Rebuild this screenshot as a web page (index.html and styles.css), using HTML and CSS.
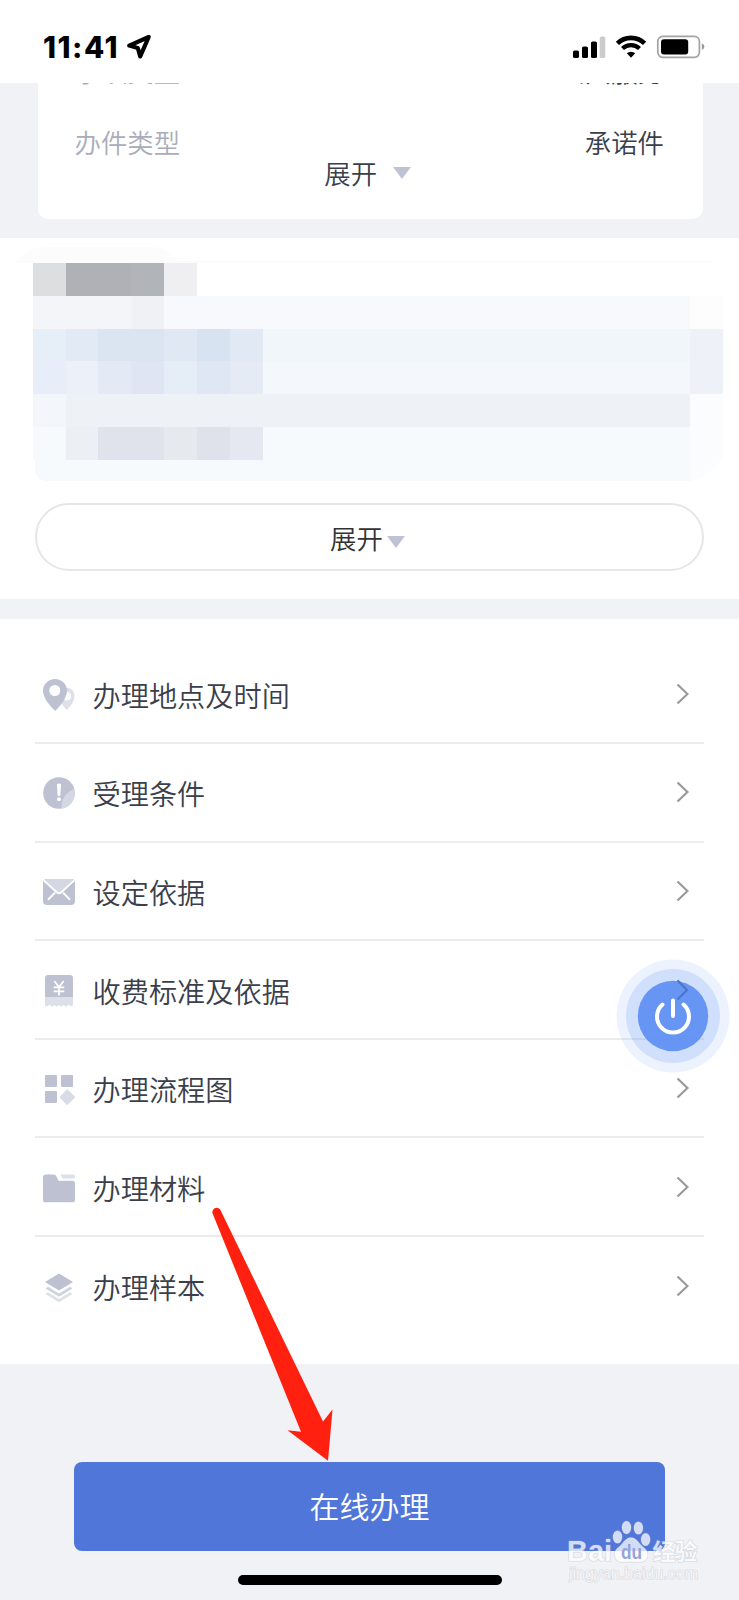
FILE: index.html
```html
<!DOCTYPE html>
<html lang="zh-CN">
<head>
  <meta charset="UTF-8" />
  <meta name="viewport" content="width=device-width, initial-scale=1" />
  <title>办事指南</title>
  <link rel="stylesheet" href="styles.css">
</head>
<body>

  <header class="status-bar">
    <div class="status-left">
      <span class="time">11:41</span>
      <svg class="location" width="26" height="26" viewBox="0 0 26 26">
        <path d="M22.7 3 L3.2 11.6 L11.8 14 L14.2 22.4 Z" fill="none" stroke="#000" stroke-width="4.2" stroke-linejoin="round"/>
      </svg>
    </div>
    <div class="status-right">
      <svg width="34" height="24" viewBox="0 0 34 24">
        <rect x="1" y="15.5" width="6" height="7.5" rx="1.6"/>
        <rect x="10" y="11.5" width="6" height="11.5" rx="1.6"/>
        <rect x="19" y="6.5" width="6" height="16.5" rx="1.6"/>
        <rect x="27.7" y="1.5" width="5.6" height="21.5" rx="1.6" fill="#ccc"/>
      </svg>
      <svg width="32" height="24" viewBox="0 0 32 24">
        <path d="M2.4 8.4 A19.5 19.5 0 0 1 29.6 8.4" fill="none" stroke="#000" stroke-width="4.6"/>
        <path d="M7.5 13.5 A12.2 12.2 0 0 1 24.5 13.5" fill="none" stroke="#000" stroke-width="4.2"/>
        <path d="M16 22.7 L11.8 18.3 A6.2 6.2 0 0 1 20.2 18.3 Z"/>
      </svg>
      <svg width="49" height="24" viewBox="0 0 49 24">
        <rect x="1.8" y="1.3" width="41.6" height="21" rx="5" fill="#fff" stroke="#a3a3a3" stroke-width="1.7"/>
        <rect x="5" y="4.2" width="27.2" height="15.2" rx="3"/>
        <path d="M45.8 8.2 Q48.4 9.4 48.4 11.6 Q48.4 13.8 45.8 15 Z" fill="#999"/>
      </svg>
    </div>
  </header>

  <main>
    <section class="info">
      <div class="info-card">
        <div class="info-row">
          <span class="label">事项类型</span>
          <span class="value">公共服务</span>
        </div>
        <div class="info-row">
          <span class="label">办件类型</span>
          <span class="value">承诺件</span>
        </div>
        <div class="info-more">展开<i class="triangle"></i></div>
      </div>
    </section>

    <section class="preview">
      <!-- masked content -->
      <svg class="mosaic" width="739" height="250" viewBox="0 0 739 250">
        <path d="M16 25 Q26 10 44 9 H154 Q170 11 180 25 Z" fill="#fcfcfd"/>
        <rect x="180" y="23" width="532" height="1.6" fill="#fafafb"/>
        <g shape-rendering="crispEdges">
          <rect x="33" y="25" width="33" height="33" fill="#dddee0"/>
          <rect x="66" y="25" width="65" height="33" fill="#b0b1b6"/>
          <rect x="131" y="25" width="33" height="33" fill="#b1b4b9"/>
          <rect x="164" y="25" width="33" height="33" fill="#efeef0"/>
          <rect x="33" y="58" width="98" height="33" fill="#f4f5f8"/>
          <rect x="131" y="58" width="33" height="33" fill="#f0f1f5"/>
          <rect x="164" y="58" width="526" height="33" fill="#f7f9fd"/>
          <rect x="690" y="58" width="33" height="33" fill="#fdfdfe"/>
          <rect x="33" y="91" width="33" height="32" fill="#e6eef8"/>
          <rect x="66" y="91" width="32" height="32" fill="#e2ebf5"/>
          <rect x="98" y="91" width="66" height="32" fill="#dae5f1"/>
          <rect x="164" y="91" width="33" height="32" fill="#e0e8f3"/>
          <rect x="197" y="91" width="33" height="32" fill="#d8e3f2"/>
          <rect x="230" y="91" width="33" height="32" fill="#e1e9f4"/>
          <rect x="263" y="91" width="427" height="32" fill="#f1f6fa"/>
          <rect x="33" y="123" width="33" height="33" fill="#e8eef9"/>
          <rect x="66" y="123" width="32" height="33" fill="#ebf0f9"/>
          <rect x="98" y="123" width="33" height="33" fill="#e3e9f5"/>
          <rect x="131" y="123" width="33" height="33" fill="#dfe5f3"/>
          <rect x="164" y="123" width="33" height="33" fill="#e5edf6"/>
          <rect x="197" y="123" width="33" height="33" fill="#dfe6f4"/>
          <rect x="230" y="123" width="33" height="33" fill="#e4ebf5"/>
          <rect x="263" y="123" width="427" height="33" fill="#f4f8fd"/>
          <rect x="690" y="91" width="33" height="65" fill="#eef1f8"/>
          <rect x="33" y="156" width="33" height="33" fill="#f3f7fb"/>
          <rect x="66" y="156" width="624" height="33" fill="#eef2f7"/>
          <rect x="33" y="189" width="657" height="33" fill="#f6fafd"/>
          <rect x="66" y="189" width="32" height="33" fill="#eceff3"/>
          <rect x="98" y="189" width="66" height="33" fill="#e0e3eb"/>
          <rect x="164" y="189" width="33" height="33" fill="#e6e9ed"/>
          <rect x="197" y="189" width="33" height="33" fill="#dfe2ea"/>
          <rect x="230" y="189" width="33" height="33" fill="#e5e8f1"/>
        </g>
        <path d="M35 222 H690 V243 H46 Q35 242 35 230 Z" fill="#f6fafd"/>
        <path d="M690 156 H723 V220 Q708 240 690 243 Z" fill="#fbfcfe"/>
      </svg>
      <button class="expand-btn"><span>展开</span><i class="triangle"></i></button>
    </section>

    <ul class="guide-list">
      <li>
        <svg class="icon" viewBox="0 0 32 32">
          <path fill-rule="evenodd" d="M22.5 8.5 C28 8.5 31.5 12.5 31.5 17 C31.5 21.7 28 26.5 24 31 C22 29 20 26.5 18.5 24.5 Z M24 13 A4.2 4.2 0 1 0 24 21.4 A4.2 4.2 0 1 0 24 13 Z" fill="#dddfe9"/>
          <path d="M12 0 C18.7 0 24 5.2 24 11.5 C24 18.5 18 26 12.2 32 C6 26 0 18.5 0 11.5 C0 5.2 5.3 0 12 0 Z" fill="#bec1d1"/>
          <circle cx="11.8" cy="11.5" r="5.5" fill="#fff"/>
        </svg>
        <span class="name">办理地点及时间</span>
        <svg class="chevron" viewBox="0 0 13 22"><path d="M1.5 1.5 L11.5 11 L1.5 20.5"/></svg>
      </li>
      <li>
        <svg class="icon" viewBox="0 0 32 32">
          <circle cx="16" cy="16" r="15.8" fill="#bec1d1"/>
          <path d="M18.5 31.6 C18.5 21 23 15.5 31 12 C33.2 22 28 30.5 18.5 31.6 Z" fill="#d5d8e4"/>
          <path d="M14 7 Q16 6 18 7 L17.4 18.5 Q16 19.5 14.6 18.5 Z" fill="#fff"/>
          <circle cx="16" cy="22.3" r="2" fill="#fff"/>
        </svg>
        <span class="name">受理条件</span>
        <svg class="chevron" viewBox="0 0 13 22"><path d="M1.5 1.5 L11.5 11 L1.5 20.5"/></svg>
      </li>
      <li>
        <svg class="icon" viewBox="0 0 32 32">
          <rect x="0" y="3" width="32" height="26" rx="4" fill="#bec1d1"/>
          <path d="M2 3.8 Q3 3 4 3 H28 Q29 3 30 3.8 L16 17 Z" fill="#d5d8e3"/>
          <path d="M1 4.5 L14 16.4 Q16 18 18 16.4 L31 4.5 M5 23.7 L12 16.6 M27 23.7 L20 16.6" fill="none" stroke="#fff" stroke-width="2"/>
        </svg>
        <span class="name">设定依据</span>
        <svg class="chevron" viewBox="0 0 13 22"><path d="M1.5 1.5 L11.5 11 L1.5 20.5"/></svg>
      </li>
      <li>
        <svg class="icon" viewBox="0 0 32 32">
          <path d="M2 21 H30 V30.5 Q27.7 32.3 25.5 29.5 Q23 33.4 20.7 29.8 Q18.3 33.4 16 29.8 Q13.7 33.4 11.3 29.8 Q9 33.4 6.5 29.5 Q4.3 32.3 2 30.5 Z" fill="#dddfe9"/>
          <path d="M5 0 H27 Q30 0 30 3 V22 H2 V3 Q2 0 5 0 Z" fill="#bec1d1"/>
          <path d="M11.3 6 L16 12 L20.7 6 M16 12 V20.5 M10.7 12.3 H21.3 M10.7 16.3 H21.3" fill="none" stroke="#fff" stroke-width="1.7"/>
        </svg>
        <span class="name">收费标准及依据</span>
        <svg class="chevron" viewBox="0 0 13 22"><path d="M1.5 1.5 L11.5 11 L1.5 20.5"/></svg>
      </li>
      <li>
        <svg class="icon" viewBox="0 0 32 32">
          <g fill="#bec1d1">
            <rect x="2" y="2" width="12" height="12" rx="1"/>
            <rect x="18" y="2" width="12" height="12" rx="1"/>
            <rect x="2" y="18" width="12" height="12" rx="1"/>
          </g>
          <rect x="18.6" y="18.5" width="11.4" height="11.4" rx="1" transform="rotate(45 24.3 24.2)" fill="#d9dbe7"/>
        </svg>
        <span class="name">办理流程图</span>
        <svg class="chevron" viewBox="0 0 13 22"><path d="M1.5 1.5 L11.5 11 L1.5 20.5"/></svg>
      </li>
      <li>
        <svg class="icon" viewBox="0 0 32 32">
          <path d="M3 2.5 H10.5 Q12.5 2.5 13.5 4.5 L15.5 8.8 H29.5 Q32 8.8 32 11.3 V27.7 Q32 30.3 29.5 30.3 H2.5 Q0 30.3 0 27.7 V5.5 Q0 2.5 3 2.5 Z" fill="#bec1d1"/>
          <path d="M17.5 2.5 H30.5 Q32 2.5 32 4.5 Q32 6.5 30.5 6.5 H19.5 Z" fill="#dddfe9"/>
        </svg>
        <span class="name">办理材料</span>
        <svg class="chevron" viewBox="0 0 13 22"><path d="M1.5 1.5 L11.5 11 L1.5 20.5"/></svg>
      </li>
      <li>
        <svg class="icon" viewBox="0 0 32 32">
          <path d="M16 2.6 L30 11.1 L16 19.6 L2 11.1 Z" fill="#bec1d1"/>
          <path d="M2.5 17.4 L5 15.8 L16 22.6 L27 15.8 L29.5 17.4 L16 25.8 Z" fill="#cfd2df"/>
          <path d="M2.5 22.9 L5 21.3 L16 28.1 L27 21.3 L29.5 22.9 L16 31.3 Z" fill="#dddfe9"/>
        </svg>
        <span class="name">办理样本</span>
        <svg class="chevron" viewBox="0 0 13 22"><path d="M1.5 1.5 L11.5 11 L1.5 20.5"/></svg>
      </li>
    </ul>
  </main>

  <footer>
    <button class="submit-btn">在线办理</button>
    <div class="home-indicator"></div>
  </footer>

  <!-- Floating power button -->
  <svg class="float-btn" viewBox="0 0 114 114">
    <circle cx="57" cy="57" r="56.5" fill="#5b8ff5" fill-opacity="0.11"/>
    <circle cx="57" cy="57" r="47" fill="#5b8ff5" fill-opacity="0.2"/>
    <circle cx="57" cy="57" r="35.2" fill="#6292f3" fill-opacity="0.96"/>
    <path d="M61.5 21.5 L71 31 L61.5 40.5" fill="none" stroke="#4c74c8" stroke-width="2"/>
    <path d="M46.5 45.5 A16 16 0 1 0 67.5 45.5 M57 41.5 V57" fill="none" stroke="#fff" stroke-width="4" stroke-linecap="round"/>
  </svg>

  <!-- Pointer to the submit button -->
  <svg class="arrow" viewBox="0 0 124 256">
    <path d="M4.6 8.5 A4.3 4.3 0 0 1 12.8 5.8 L115 216.5 L124.5 204.5 L120 255.8 L79.5 225.3 L93 226.8 Z" fill="#ff2010"/>
  </svg>

  <svg class="watermark" viewBox="0 0 140 70">
    <g fill="#fff" fill-opacity="0.75" stroke="#a9aebc" stroke-opacity="0.4" stroke-width="1.2" paint-order="stroke">
      <text x="7" y="41" font-size="30" font-weight="bold" textLength="45" lengthAdjust="spacingAndGlyphs">Bai</text>
      <ellipse cx="57.5" cy="17" rx="4.6" ry="6.3"/>
      <ellipse cx="66.5" cy="7.5" rx="4.6" ry="6.5"/>
      <ellipse cx="78.4" cy="8" rx="4.6" ry="6.3"/>
      <ellipse cx="85.6" cy="19.5" rx="4.6" ry="6.3"/>
      <path d="M71 17.5 C76 17.5 78 22 82 26 C87 30 89 33 87 38 C84 44 77 42 71 41.7 C65 42 58 44 55.5 38 C53 33 55 30 60 26 C64 22 66 17.5 71 17.5 Z"/>
      <text x="92.5" y="40" font-size="23" font-weight="bold" class="cjk" textLength="45">经验</text>
      <text x="9" y="58.5" font-size="16.5" textLength="129" lengthAdjust="spacingAndGlyphs">jingyan.baidu.com</text>
    </g>
    <text x="61" y="39" font-size="20" font-weight="bold" fill="#93a3dc" textLength="21" lengthAdjust="spacingAndGlyphs">du</text>
  </svg>

</body>
</html>
```

FILE: styles.css
```css
/* Base Styles */
* {
  box-sizing: border-box;
}

body {
  margin: 0;
  width: 739px;
  height: 1600px;
  position: relative;
  overflow: hidden;
  display: flex;
  flex-direction: column;
  font-family: "Noto Sans CJK SC", sans-serif;
  font-weight: 350;
  background: #f1f2f6;
  color: #3b3f4b;
}

svg {
  display: block;
  flex-shrink: 0;
}

button {
  font-family: inherit;
  font-weight: inherit;
  padding: 0;
}

/* Status bar */
.status-bar {
  height: 83px;
  flex-shrink: 0;
  background: #fff;
  display: flex;
  justify-content: space-between;
  align-items: flex-start;
  padding: 34px 34px 0 43px;
}

.status-left,
.status-right {
  display: flex;
}

.time {
  font-family: Inter, sans-serif;
  font-size: 29.5px;
  font-weight: 800;
  letter-spacing: 1.5px;
  line-height: 27px;
  width: 83px;
  color: #000;
}

.status-right {
  gap: 9px;
  padding-top: 1px;
}

/* Info card */
.info {
  height: 155px;
  overflow: hidden;
  padding: 0 36.5px 0 37.5px;
}

.info-card {
  height: 136px;
  background: #fff;
  border-radius: 0 0 10px 10px;
  padding: 0 38.5px 0 37px;
  display: flex;
  flex-direction: column;
  justify-content: flex-end;
}

.info-row {
  height: 70px;
  flex-shrink: 0;
  display: flex;
  justify-content: space-between;
  align-items: center;
  font-size: 26.4px;
  line-height: 40px;
}

.info-row:first-child {
  margin-bottom: 1px;
}

.label {
  color: #a9adbb;
}

.info-more {
  height: 41px;
  flex-shrink: 0;
  margin: -25px 0 26px;
  padding-right: 3px;
  display: flex;
  justify-content: center;
  align-items: center;
  gap: 16px;
  font-size: 26.4px;
  line-height: 40px;
}

.triangle {
  border: 9.5px solid transparent;
  border-top: 12px solid #bfc2d3;
  border-bottom: 0;
}

/* Masked preview */
.preview {
  height: 361px;
  background: #fff;
}

.mosaic {
  margin-bottom: 15px;
}

.expand-btn {
  display: flex;
  justify-content: center;
  align-items: center;
  gap: 4px;
  width: 669px;
  height: 68px;
  margin: 0 35px;
  padding: 2px 4px 0 0;
  border: 2px solid #e6e6e8;
  border-radius: 34px;
  background: #fff;
  color: #333;
  font-size: 26.4px;
  line-height: 40px;
}

.expand-btn .triangle {
  margin-top: 7px;
}

/* Guide list */
.guide-list {
  list-style: none;
  margin: 20px 0 0;
  padding: 26.5px 35px 28px;
  height: 744.5px;
  background: #fff;
}

.guide-list li {
  display: flex;
  align-items: center;
  height: 98.6px;
  padding: 0 15px 0 8px;
  border-bottom: 2px solid #ececee;
}

.guide-list li:last-child {
  border-bottom: none;
}

.icon {
  width: 32px;
  height: 32px;
  margin-top: 2px;
}

.name {
  flex: 1;
  margin-left: 17.5px;
  padding-top: 2px;
  font-size: 28.2px;
  line-height: 42px;
}

.chevron {
  width: 13px;
  height: 22px;
  fill: none;
  stroke: #999;
  stroke-width: 2.2;
}

/* Footer */
footer {
  flex: 1;
  display: flex;
  flex-direction: column;
  align-items: center;
  padding-top: 98.5px;
}

.submit-btn {
  width: 591px;
  height: 89px;
  padding-bottom: 3px;
  border: none;
  border-radius: 8px;
  background: #5076da;
  color: #fff;
  font-size: 30px;
}

.home-indicator {
  width: 264px;
  height: 10px;
  margin-top: 24px;
  border-radius: 5px;
  background: #000;
}

/* Overlays */
.float-btn {
  position: absolute;
  left: 616px;
  top: 959px;
  width: 114px;
  height: 114px;
}

.arrow {
  position: absolute;
  left: 208px;
  top: 1205px;
  width: 124px;
  height: 256px;
  overflow: visible;
}

.watermark {
  position: absolute;
  left: 560px;
  top: 1520px;
  width: 140px;
  height: 70px;
  font-family: "Liberation Sans", sans-serif;
  font-weight: 400;
}

.cjk {
  font-family: "Noto Sans CJK SC", sans-serif;
}
```
